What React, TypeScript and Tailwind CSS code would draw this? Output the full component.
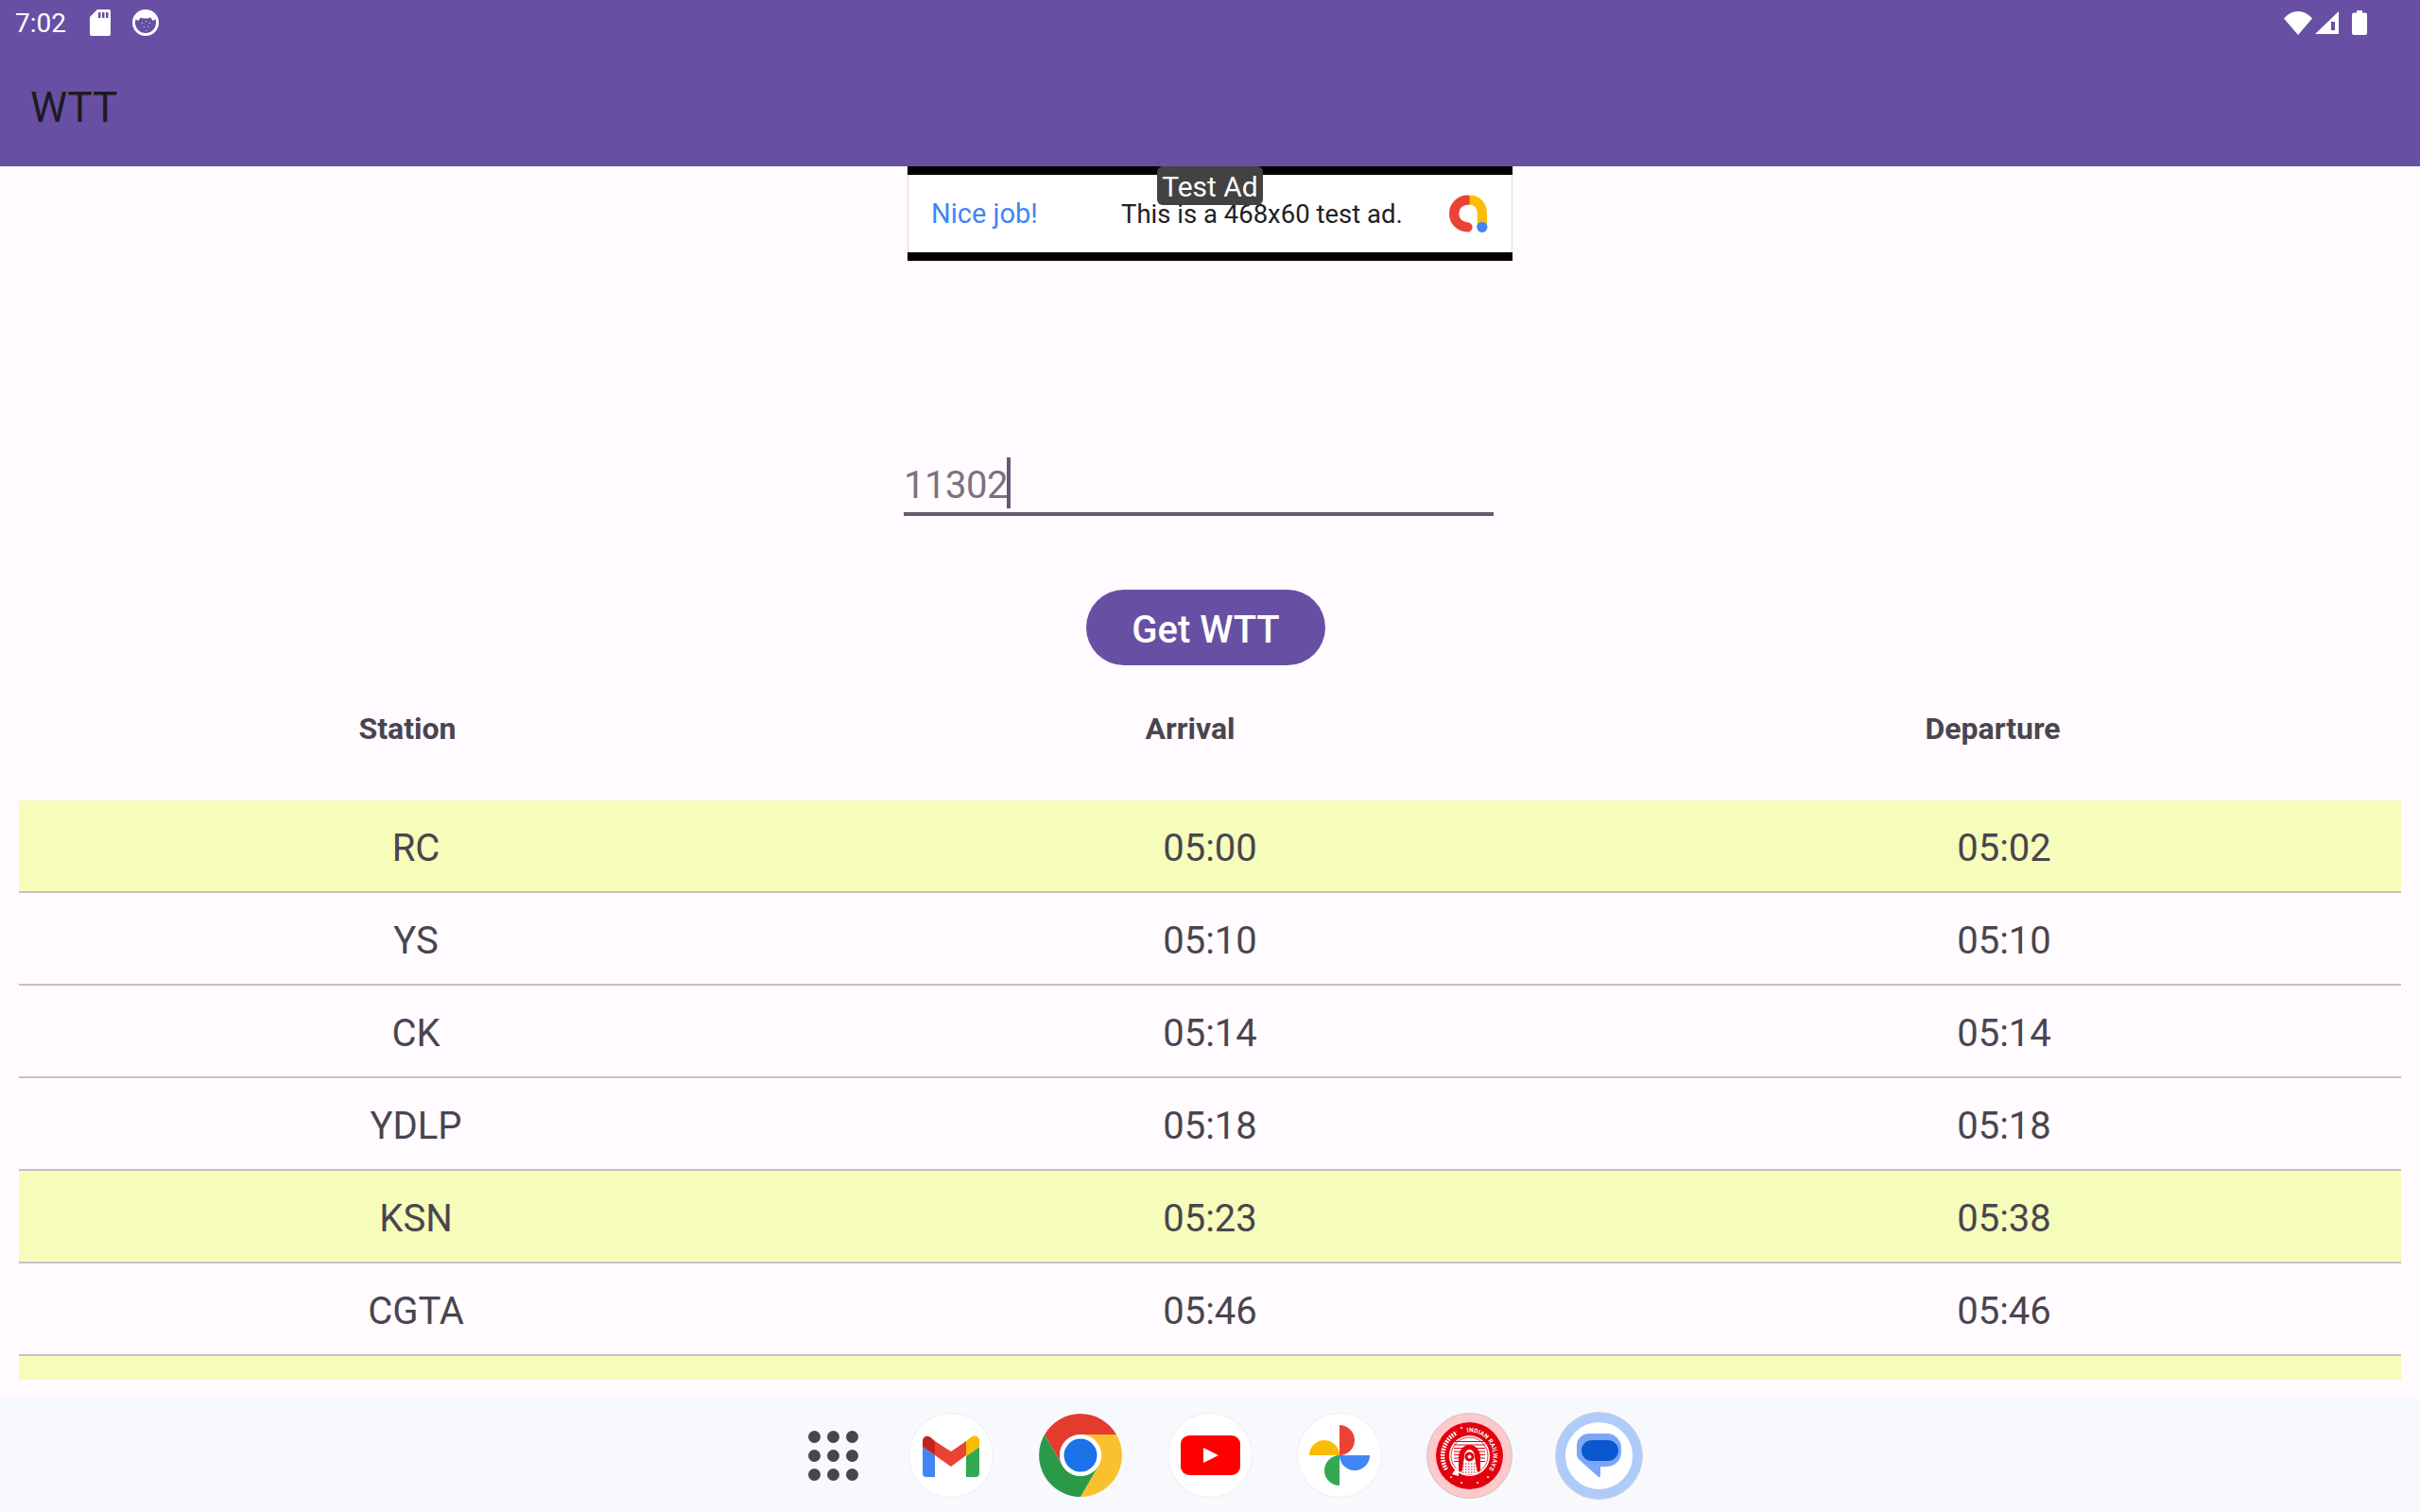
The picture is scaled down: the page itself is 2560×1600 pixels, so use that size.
const rows = [
  { station: 'RC', arrival: '05:00', departure: '05:02', halt: true },
  { station: 'YS', arrival: '05:10', departure: '05:10', halt: false },
  { station: 'CK', arrival: '05:14', departure: '05:14', halt: false },
  { station: 'YDLP', arrival: '05:18', departure: '05:18', halt: false },
  { station: 'KSN', arrival: '05:23', departure: '05:38', halt: true },
  { station: 'CGTA', arrival: '05:46', departure: '05:46', halt: false },
];

function SdIcon() {
  return (
    <svg width="22" height="28" viewBox="0 0 22 28">
      <path d="M8 0h12a2 2 0 0 1 2 2v24a2 2 0 0 1-2 2H2a2 2 0 0 1-2-2V8z" fill="#fff" />
      <path d="M9 3h2.500v6H9zM13 3h2.500v6H13zM17 3h2.500v6H17z" fill="#6750A4" />
    </svg>
  );
}

function FaceIcon() {
  return (
    <svg width="28" height="28" viewBox="0 0 28 28">
      <circle cx="14" cy="14" r="12.500" fill="#6750A4" stroke="#fff" strokeWidth="3" />
      <path d="M3 10c3-5 6-7.500 11-7.500S22 5 25 10l-3.500 2-2-3.500c-1.500.8-3.500 1-5.500 1s-4-.2-5.500-1l-2 3.500z" fill="#fff" />
      <path d="M10 14h1v1h-1zM14 12h1v1h-1zM18 14h1v1h-1zM12 18h1v1h-1zM16 18h1v1h-1zM14 22h1v1h-1z" fill="#d8d0ea" />
    </svg>
  );
}

function WifiIcon() {
  return (
    <svg width="30" height="25" viewBox="0 0 30 25">
      <path d="M15 25 0 7.500C4 3 9 0 15 0s11 3 15 7.500z" fill="#fff" />
    </svg>
  );
}

function SignalIcon() {
  return (
    <svg width="25" height="24" viewBox="0 0 25 24">
      <path d="M25 0v24H0z" fill="#fff" />
      <path d="M17 11h4v9h-4z" fill="#6750A4" />
    </svg>
  );
}

function BatteryIcon() {
  return (
    <svg width="16" height="26" viewBox="0 0 16 26">
      <path d="M5 0h6v2.500h3a2 2 0 0 1 2 2V24a2 2 0 0 1-2 2H2a2 2 0 0 1-2-2V4.500a2 2 0 0 1 2-2h3z" fill="#fff" />
    </svg>
  );
}

function AdLogo() {
  return (
    <svg width="42" height="42" viewBox="0 0 41 40">
      <path d="M20 6C12 6 6 12 6 20s6 14 14 14" fill="none" stroke="#EA4335" strokeWidth="10" strokeLinecap="round" />
      <path d="M22 6c8 0 13 6 13 14v13" fill="none" stroke="#FBBC04" strokeWidth="10" />
      <circle cx="35" cy="34" r="5.500" fill="#4285F4" />
    </svg>
  );
}

function AppsGrid() {
  return (
    <svg width="53" height="53" viewBox="0 0 53 53">
      {[6.500, 26.500, 46.500].map((y) =>
        [6.500, 26.500, 46.500].map((x) => <circle key={`${x}-${y}`} cx={x} cy={y} r="6.500" fill="#46464F" />)
      )}
    </svg>
  );
}

function DockCircle({ children }: { children: React.ReactNode }) {
  return (
    <div className="w-[88px] h-[88px] rounded-full bg-white flex items-center justify-center shadow-[0_0_2px_rgba(0,0,0,0.12)]">
      {children}
    </div>
  );
}

function Gmail() {
  return (
    <svg width="60" height="45" viewBox="0 0 60 45">
      <path d="M0 13v28a4 4 0 0 0 4 4h9V22z" fill="#4285F4" />
      <path d="M60 13v28a4 4 0 0 1-4 4h-10V23z" fill="#34A853" />
      <path d="M13 7l17 11L46 7v15L30 34 13 22z" fill="#EA4335" />
      <path d="M0 13l13 9V7L9 3.500C5 0 0 2 0 7z" fill="#C5221F" />
      <path d="M46 7l5-4c4-3 9-1 9 4v6L46 23z" fill="#FBBC04" />
    </svg>
  );
}

function Chrome() {
  return (
    <svg width="88" height="88" viewBox="0 0 88 88">
      <path d="M44 0a44 44 0 0 1 38 22H44a22 22 0 0 0-19 33L6 22A44 44 0 0 1 44 0z" fill="#E33B2E" />
      <path d="M82 22a44 44 0 0 1-38 66l19-33a22 22 0 0 0-19-33z" fill="#FBC02D" />
      <path d="M6 22l19 33a22 22 0 0 0 38 0L44 88A44 44 0 0 1 6 22z" fill="#2A9A48" />
      <circle cx="44" cy="44" r="22" fill="#fff" />
      <circle cx="44" cy="44" r="17.500" fill="#1A73E8" />
    </svg>
  );
}

function YouTube() {
  return (
    <svg width="63" height="42" viewBox="0 0 63 42">
      <rect width="63" height="42" rx="9" fill="#FF0000" />
      <path d="M24 13v16l16-8z" fill="#fff" />
    </svg>
  );
}

function Photos() {
  return (
    <svg width="64" height="64" viewBox="0 0 64 64">
      <path d="M32 0a16 16 0 0 1 0 32z" fill="#EA4335" />
      <path d="M64 32a16 16 0 0 1-32 0z" fill="#4285F4" />
      <path d="M32 64a16 16 0 0 1 0-32z" fill="#34A853" />
      <path d="M0 32a16 16 0 0 1 32 0z" fill="#FBBC04" />
    </svg>
  );
}

function RailwaysLogo() {
  const stripes = [0, 1, 2, 3, 4, 5, 6];
  const grill = [0, 1, 2, 3];
  return (
    <svg width="91" height="91" viewBox="0 0 91 91">
      <circle cx="45.500" cy="45.500" r="45" fill="#FFC9CC" stroke="#c9c4c6" strokeWidth="1" />
      <circle cx="45.500" cy="45.500" r="35.500" fill="#E2000F" />
      <circle cx="45.500" cy="45.500" r="21.500" fill="#fff" />
      <circle cx="45.500" cy="45.500" r="19.500" fill="none" stroke="#E2000F" strokeWidth="0.800" />
      {stripes.map((i) => (
        <rect key={i} x="29" y={30 + i * 3.5} width="33" height="1" fill="#E2000F" />
      ))}
      <path d="M34 62V47c0-7 5-13 11.500-13S57 40 57 47v15z" fill="#E2000F" />
      <path d="M37 65l3-18c0-5 2.500-8 5.500-8s5.500 3 5.500 8l3 18z" fill="#fff" />
      <circle cx="45.500" cy="46.500" r="5" fill="#E2000F" />
      <circle cx="45.500" cy="46.500" r="2" fill="#fff" />
      {grill.map((i) => (
        <path key={i} d={`M38 ${54 + i * 3}h15`} stroke="#E2000F" strokeWidth="1.200" strokeDasharray="1.500 1.500" />
      ))}
      <path d="M27 65l7-10v12z" fill="#fff" />
      <defs>
        <path id="rail-arc" d="M42.900 20.600A25 25 0 0 1 66 59.800" />
      </defs>
      <text fill="#fff" fontSize="6.500" fontWeight="700" fontFamily="Roboto, sans-serif">
        <textPath href="#rail-arc" textLength="57">INDIAN RAILWAYS</textPath>
      </text>
      {/* hindi legend on the left is too small to read, drawn as a rough mark */}
      <path d="M21 60A28 28 0 0 1 32 21" fill="none" stroke="#fff" strokeWidth="4.500" strokeDasharray="1.800 1.200" />
      <circle cx="37" cy="16" r="1" fill="#fff" />
      <circle cx="65" cy="68" r="1" fill="#fff" />
      <circle cx="54" cy="74" r="1" fill="#fff" />
      <circle cx="37" cy="74" r="1" fill="#fff" />
      <circle cx="26" cy="68" r="1" fill="#fff" />
    </svg>
  );
}

function Messages() {
  return (
    <div className="w-[91px] h-[91px] rounded-full bg-white border-[10px] border-[#AECBFA] outline outline-1 outline-[#c9cbd2] flex items-center justify-center">
      <svg width="47" height="46" viewBox="0 0 47 46">
        <path d="M12 0h20a15 15 0 0 1 15 15v5a15 15 0 0 1-15 15h-7v10c0 1.500-1.500 1.500-2.500.5L4 29A14 14 0 0 1 0 14 13 13 0 0 1 12 0z" fill="#7BA7F7" />
        <rect x="5" y="7" width="39" height="22" rx="11" fill="#0B57D0" />
      </svg>
    </div>
  );
}

export default function App() {
  return (
    <div className="w-[2560px] h-[1600px] flex flex-col overflow-hidden bg-[#FFFBFE] font-['Roboto',sans-serif]">
      <header className="h-[176px] shrink-0 bg-[#6750A4]">
        <div className="h-[48px] flex items-center justify-between pl-4 pr-[56px]">
          <div className="flex items-center">
            <span className="text-[28px] leading-none mt-[2px] text-white">7:02</span>
            <span className="ml-[25px]"><SdIcon /></span>
            <span className="ml-[23px]"><FaceIcon /></span>
          </div>
          <div className="flex items-center">
            <WifiIcon />
            <span className="ml-[3px]"><SignalIcon /></span>
            <span className="ml-[14px]"><BatteryIcon /></span>
          </div>
        </div>
        <div className="pl-8 pt-[40px] text-[44px] leading-[52px] text-[#1D1B20]">WTT</div>
      </header>

      <main className="flex-1 min-h-0 flex flex-col">
        <div className="relative mx-auto w-[640px] h-[100px] shrink-0 bg-white border-y-[9px] border-black">
          <div className="h-full flex items-center pt-[2px] border-x border-[#dddddd] text-[#202124]">
            <span className="ml-[24px] w-[201px] text-[29px] text-[#4285F4]">Nice job!</span>
            <span className="w-[346px] text-[27.500px]">This is a 468x60 test ad.</span>
            <span className="-mt-[2px]"><AdLogo /></span>
          </div>
          <div className="absolute left-[264px] -top-[9px] w-[112px] h-[41px] pt-[1px] rounded-md bg-[#424242] text-white text-[30px] leading-[41px] text-center">
            Test Ad
          </div>
        </div>

        <div className="ml-[956px] mt-[208px] w-[624px] h-[62px] border-b-4 border-[#625B71] flex items-start">
          <span className="text-[40px] tracking-[-0.5px] leading-[54px] mt-[3px] text-[#79747E]">11302</span>
          <span className="w-[4px] h-[54px] -ml-[1px] bg-[#625B71]" />
        </div>

        <div className="ml-[1149px] mt-[78px] pt-[6px] w-[253px] h-[80px] rounded-full bg-[#6750A4] text-white text-[40px] font-medium flex items-center justify-center">
          Get WTT
        </div>

        <div className="mx-5 mt-[48px] grid grid-cols-[822px_834px_864px] text-[32px] leading-[38px] font-bold text-[#49454F] text-center">
          <div>Station</div>
          <div>Arrival</div>
          <div>Departure</div>
        </div>

        <div className="mx-5 mt-[57px] h-[613px] overflow-hidden text-[40px] text-[#49454F] text-center">
          {rows.map((row) => (
            <div
              key={row.station}
              className={`h-[98px] pt-[6px] grid grid-cols-3 items-center border-b-2 border-[#C4C2C4] ${row.halt ? 'bg-[#F6FCBA]' : ''}`}
            >
              <div>{row.station}</div>
              <div>{row.arrival}</div>
              <div>{row.departure}</div>
            </div>
          ))}
          <div className="h-[98px] bg-[#F6FCBA]" />
        </div>
      </main>

      <footer className="h-[120px] shrink-0 bg-[#F8F9FD] flex items-center justify-center pl-8">
        <div className="flex items-center gap-[49px]">
          <div className="mr-[5px]"><AppsGrid /></div>
          <DockCircle><Gmail /></DockCircle>
          <Chrome />
          <DockCircle><YouTube /></DockCircle>
          <DockCircle><Photos /></DockCircle>
          <div className="-ml-[1px]"><RailwaysLogo /></div>
          <div className="-ml-[3px]"><Messages /></div>
        </div>
      </footer>
    </div>
  );
}
